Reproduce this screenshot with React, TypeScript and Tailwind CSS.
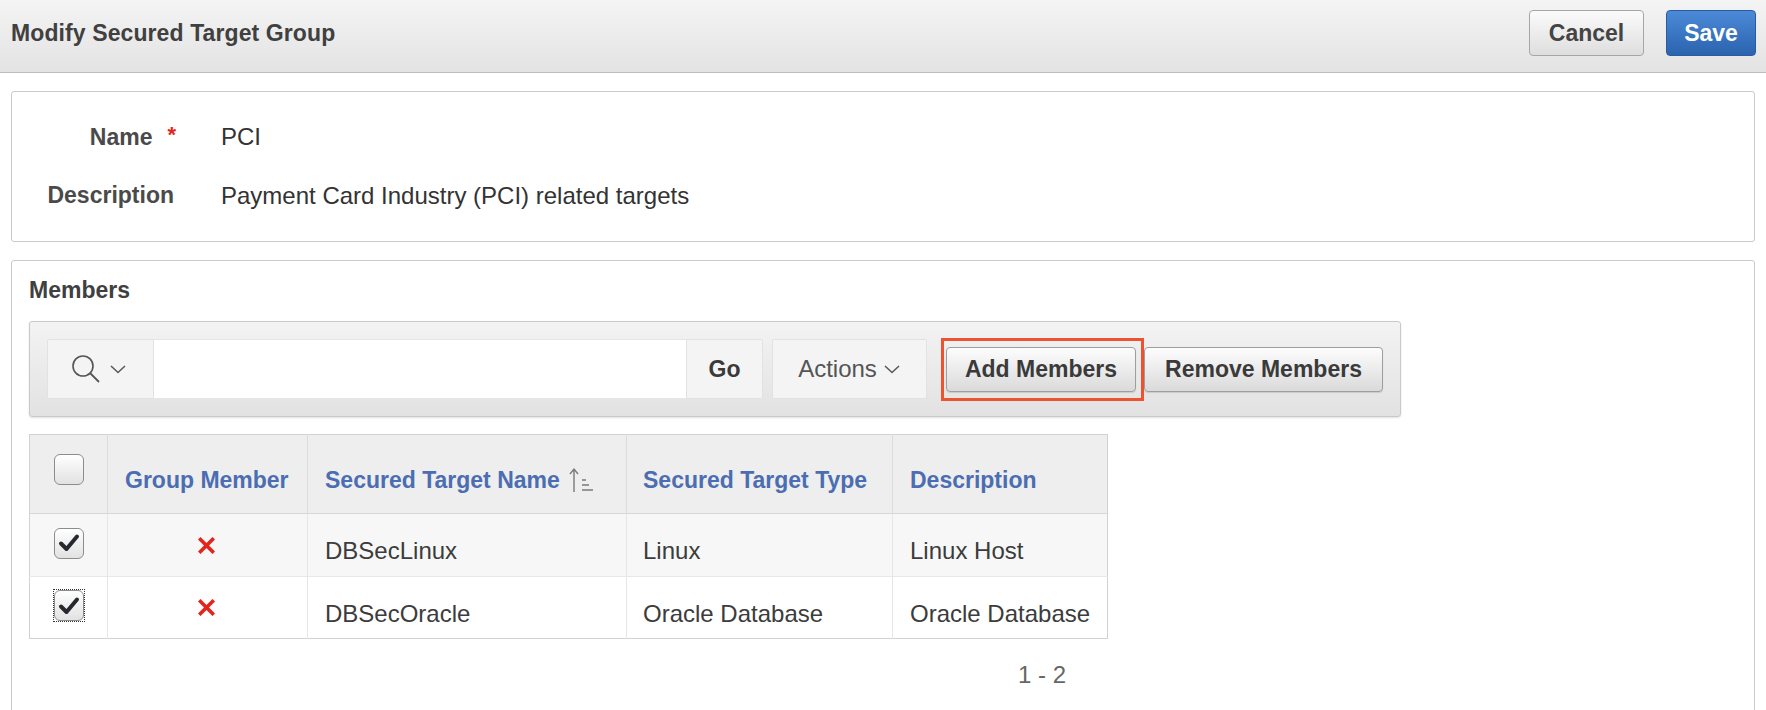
import React from "react";

// Table rows
interface Member {
  id: number;
  name: string;
  type: string;
  description: string;
  focused?: boolean;
}

const members: Member[] = [
  { id: 1, name: "DBSecLinux", type: "Linux", description: "Linux Host" },
  { id: 2, name: "DBSecOracle", type: "Oracle Database", description: "Oracle Database", focused: true },
];

const Checkbox = ({ checked, focused }: { checked?: boolean; focused?: boolean }) => (
  <span
    className={
      focused
        ? "inline-flex p-[1px] outline-[1.5px] outline-dotted outline-[#333] -outline-offset-[1px]"
        : "inline-flex p-[1px]"
    }
  >
    <span className="flex h-[31px] w-[30px] items-center justify-center rounded-[6px] border-[1.5px] border-[#8c8c8c] bg-gradient-to-b from-white to-[#e2e2e2] shadow-[inset_0_1px_1px_rgba(255,255,255,0.9)]">
      {checked && (
        <svg width="22" height="20" viewBox="0 0 22 20">
          <path d="M3 10.5 L8.5 16 L19 3.5" fill="none" stroke="#262a2e" strokeWidth="4" strokeLinecap="round" strokeLinejoin="round" />
        </svg>
      )}
    </span>
  </span>
);

const RedX = () => (
  <svg width="17" height="17" viewBox="0 0 17 17">
    <path d="M2.5 2.5 L14.5 14.5 M14.5 2.5 L2.5 14.5" stroke="#e3261b" strokeWidth="3.6" strokeLinecap="square" />
  </svg>
);

const Chevron = () => (
  <svg width="18" height="10" viewBox="0 0 18 10">
    <path d="M2 2 L9 8.5 L16 2" fill="none" stroke="#5a5a5a" strokeWidth="1.6" />
  </svg>
);

const SortAsc = () => (
  <svg width="26" height="28" viewBox="0 0 26 28" className="ml-[8px]">
    <path d="M6 26 V3 M2 8 L6 3 L10 8" fill="none" stroke="#7a7a7a" strokeWidth="1.4" />
    <path d="M14 14 H18 M14 19 H21 M14 24 H25" stroke="#7a7a7a" strokeWidth="1.4" />
  </svg>
);

const grayBtn =
  "flex h-[45px] items-center rounded-[4px] border border-[#9e9e9e] bg-gradient-to-b from-[#fdfdfd] to-[#dadada] px-[15px] text-[23px] font-bold text-[#3a3a3a] shadow-[0_1px_1px_rgba(0,0,0,0.12)]";

export default function App() {
  return (
    <div className="min-h-[710px] bg-white text-[#333] [font-family:'Liberation_Sans',Arial,sans-serif]">
      {/* title bar */}
      <div className="flex h-[73px] items-start justify-between border-b border-[#bdbdbd] bg-gradient-to-b from-[#f4f4f4] to-[#e3e3e3] pl-[11px] pr-[10px] pt-[10px]">
        <h1 className="flex h-[46px] items-center text-[23px] font-bold tracking-[0.1px] text-[#404040]">Modify Secured Target Group</h1>
        <div className="flex gap-[22px]">
          <button className="h-[46px] w-[115px] rounded-[4px] border border-[#a6a6a6] bg-gradient-to-b from-[#fbfbfb] to-[#dedede] text-[23px] font-bold text-[#444]">
            Cancel
          </button>
          <button className="h-[46px] w-[90px] rounded-[4px] border border-[#2b5b9f] bg-gradient-to-b from-[#4b8ad8] to-[#2b63ae] text-[23px] font-bold text-white">
            Save
          </button>
        </div>
      </div>

      {/* name / description */}
      <div className="mx-[11px] mt-[18px] rounded-[3px] border border-[#cacaca] pb-[16px] pt-[15px]">
        <div className="flex h-[59px] items-center">
          <div className="w-[164px] text-right text-[23px] font-bold text-[#4a4a4a]">
            Name<span className="ml-[15px] align-[3px] text-[22px] text-[#e1261c]">*</span>
          </div>
          <div className="ml-[45px] text-[24px] text-[#333]">PCI</div>
        </div>
        <div className="flex h-[59px] items-center">
          <div className="w-[164px] pr-[2px] text-right text-[23px] font-bold text-[#4a4a4a]">Description</div>
          <div className="ml-[45px] text-[24px] text-[#333]">Payment Card Industry (PCI) related targets</div>
        </div>
      </div>

      {/* members */}
      <div className="mx-[11px] mt-[18px] h-[460px] rounded-t-[3px] border border-[#cacaca] px-[17px] pt-[15px]">
        <h2 className="h-[28px] text-[23px] font-bold leading-[28px] text-[#404040]">Members</h2>

        <div className="mt-[17px] flex h-[96px] w-[1372px] items-center rounded-[3px] border border-[#c9c9c9] bg-gradient-to-b from-[#f3f3f3] to-[#e2e2e2] px-[17px] shadow-[0_1px_2px_rgba(0,0,0,0.12)]">
          <div className="flex h-[60px]">
            <button className="flex w-[107px] items-center justify-center gap-[8px] rounded-l-[2px] border border-[#e2e2e2] bg-[#f4f4f4] pr-[4px]">
              <svg width="30" height="30" viewBox="0 0 30 30">
                <circle cx="12" cy="12" r="10" fill="none" stroke="#555" strokeWidth="1.6" />
                <path d="M19 19 L28 28" stroke="#555" strokeWidth="1.8" />
              </svg>
              <Chevron />
            </button>
            <input className="w-[532px] border-y border-[#e6e6e6] bg-white outline-none" />
            <button className="w-[77px] rounded-r-[2px] border border-[#e2e2e2] bg-[#f4f4f4] text-[23px] font-bold text-[#3a3a3a]">
              Go
            </button>
          </div>
          <button className="ml-[9px] flex h-[60px] w-[155px] items-center justify-center gap-[6px] rounded-[2px] border border-[#e2e2e2] bg-[#f4f4f4] text-[24px] text-[#555]">
            Actions
            <Chevron />
          </button>
          <span className="ml-[14px] flex border-[3px] border-[#ec5330] py-[6px] pl-[2px] pr-[5px]">
            <button className={`${grayBtn} w-[190px] justify-center`}>Add Members</button>
          </span>
          <button className={`${grayBtn} w-[239px] justify-center`}>Remove Members</button>
        </div>

        <table className="mt-[17px] table-fixed border-collapse border border-[#d2d2d2] text-[24px]">
          <colgroup>
            <col className="w-[78px]" />
            <col className="w-[200px]" />
            <col className="w-[319px]" />
            <col className="w-[266px]" />
            <col className="w-[214px]" />
          </colgroup>
          <thead>
            <tr className="h-[79px] border-b border-[#d6d6d6] bg-[#eeeeee] text-left text-[23px] font-bold text-[#4b6db2]">
              <th className="border-r border-[#dcdcdc] text-center align-middle">
                <Checkbox />
              </th>
              <th className="border-r border-[#dcdcdc] px-[17px] pt-[12px] font-bold">Group Member</th>
              <th className="border-r border-[#dcdcdc] px-[17px] pt-[12px] font-bold">
                <span className="flex items-center">
                  Secured Target Name
                  <SortAsc />
                </span>
              </th>
              <th className="border-r border-[#dcdcdc] px-[16px] pt-[12px] font-bold">Secured Target Type</th>
              <th className="px-[17px] pt-[12px] font-bold">Description</th>
            </tr>
          </thead>
          <tbody className="text-[#3c3c3c]">
            {members.map((m, i) => (
              <tr key={m.id} className={i === 0 ? "h-[63px] border-b border-[#e8e8e8] bg-[#f7f7f7]" : "h-[62px] bg-white"}>
                <td className="border-r border-[#e6e6e6] text-center align-middle">
                  <Checkbox checked focused={m.focused} />
                </td>
                <td className="border-r border-[#e6e6e6] align-middle">
                  <span className="flex justify-center pr-[2px]">
                    <RedX />
                  </span>
                </td>
                <td className="border-r border-[#e6e6e6] px-[17px] pt-[12px]">{m.name}</td>
                <td className="border-r border-[#e6e6e6] px-[16px] pt-[12px]">{m.type}</td>
                <td className="px-[17px] pt-[12px] whitespace-nowrap">{m.description}</td>
              </tr>
            ))}
          </tbody>
        </table>

        <div className="flex w-[1077px] justify-end pr-[40px] pt-[18px] text-[24px] text-[#666]">1 - 2</div>
      </div>
    </div>
  );
}
